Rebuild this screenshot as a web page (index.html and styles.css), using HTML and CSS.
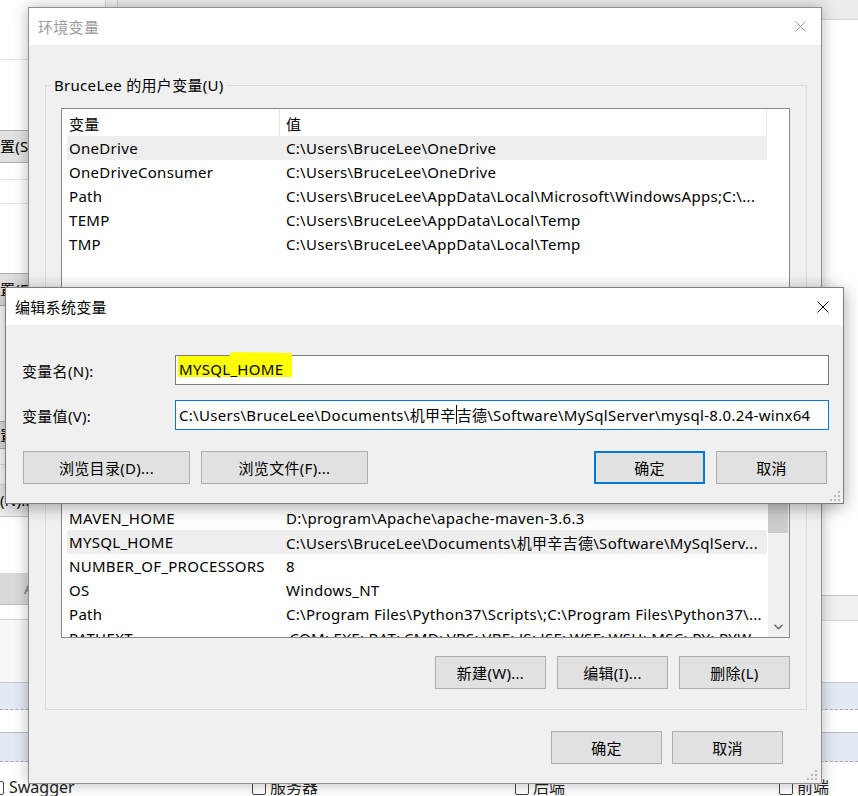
FILE: index.html
```html
<!DOCTYPE html>
<html lang="zh-CN">
<head>
<meta charset="utf-8">
<title>环境变量</title>
<link rel="stylesheet" href="styles.css">
</head>
<body>
<div class="desk">
  <div class="bgwin">
    <div class="bgmain">
      <div class="pane-left">
        <div class="lp-head"></div>
        <div class="lp-btn lp-btn1">置(S)...</div>
        <div class="lp-row1"></div>
        <div class="lp-row2"></div>
        <div class="lp-btn lp-btn2">置(E)...</div>
        <div class="lp-btn lp-btn3">置(V)...</div>
        <div class="lp-row3"></div>
        <div class="lp-row4"></div>
        <div class="lp-nbtn">(N)...</div>
        <div class="lp-dark">A</div>
        <div class="lp-row5"></div>
        <div class="lp-light"></div>
        <div class="blue1"></div>
        <div class="white22"></div>
        <div class="blue2"></div>
      </div>
      <div class="pane-mid"></div>
      <div class="pane-right">
        <div class="rp-head"></div>
        <div class="rp-gray"></div>
        <div class="blue1 rp-blue1"></div>
        <div class="white22"></div>
        <div class="blue2"></div>
      </div>
    </div>
    <div class="checks">
      <div class="chk chk1"><span class="box"></span><span>Swagger</span></div>
      <div class="chk chk2"><span class="box"></span><span>服务器</span></div>
      <div class="chk chk3"><span class="box"></span><span>后端</span></div>
      <div class="chk chk4"><span class="box"></span><span>前端</span></div>
    </div>
  </div>

  <div class="env">
    <div class="env-title">
      <span>环境变量</span>
      <svg class="xicon" width="11" height="11" viewBox="0 0 11 11"><path d="M0.5 0.5 L10.5 10.5 M10.5 0.5 L0.5 10.5" stroke="#9a9a9a" stroke-width="1" fill="none"/></svg>
    </div>
    <div class="env-body">
      <fieldset class="group group-user">
        <legend>BruceLee 的用户变量(U)</legend>
        <div class="list list-user">
          <div class="list-main">
            <div class="list-head"><span class="h-name">变量</span><span class="h-val">值</span></div>
            <div class="row sel"><span class="c-name">OneDrive</span><span class="c-val">C:\Users\BruceLee\OneDrive</span></div>
            <div class="row"><span class="c-name">OneDriveConsumer</span><span class="c-val">C:\Users\BruceLee\OneDrive</span></div>
            <div class="row"><span class="c-name">Path</span><span class="c-val">C:\Users\BruceLee\AppData\Local\Microsoft\WindowsApps;C:\...</span></div>
            <div class="row"><span class="c-name">TEMP</span><span class="c-val">C:\Users\BruceLee\AppData\Local\Temp</span></div>
            <div class="row"><span class="c-name">TMP</span><span class="c-val">C:\Users\BruceLee\AppData\Local\Temp</span></div>
          </div>
        </div>
        <div class="group-btns">
          <button class="btn">新建(N)...</button>
          <button class="btn">编辑(E)...</button>
          <button class="btn">删除(D)</button>
        </div>
      </fieldset>

      <fieldset class="group group-sys">
        <legend>系统变量(S)</legend>
        <div class="list list-sys">
          <div class="list-main">
            <div class="list-head"><span class="h-name">变量</span><span class="h-val">值</span></div>
            <div class="row"><span class="c-name">ComSpec</span><span class="c-val">C:\Windows\system32\cmd.exe</span></div>
            <div class="row"><span class="c-name">DriverData</span><span class="c-val">C:\Windows\System32\Drivers\DriverData</span></div>
            <div class="row"><span class="c-name">JAVA_HOME</span><span class="c-val">C:\Program Files\Java\jdk1.8.0_281</span></div>
            <div class="row"><span class="c-name">MAVEN_HOME</span><span class="c-val">D:\program\Apache\apache-maven-3.6.3</span></div>
            <div class="row sel"><span class="c-name">MYSQL_HOME</span><span class="c-val">C:\Users\BruceLee\Documents\机甲辛吉德\Software\MySqlServ...</span></div>
            <div class="row"><span class="c-name">NUMBER_OF_PROCESSORS</span><span class="c-val">8</span></div>
            <div class="row"><span class="c-name">OS</span><span class="c-val">Windows_NT</span></div>
            <div class="row"><span class="c-name">Path</span><span class="c-val">C:\Program Files\Python37\Scripts\;C:\Program Files\Python37\...</span></div>
            <div class="row"><span class="c-name">PATHEXT</span><span class="c-val">.COM;.EXE;.BAT;.CMD;.VBS;.VBE;.JS;.JSE;.WSF;.WSH;.MSC;.PY;.PYW</span></div>
          </div>
          <div class="vscroll">
            <div class="sb-up"></div>
            <div class="sb-thumb"></div>
            <div class="sb-fill"></div>
            <div class="sb-down"><svg width="9" height="6" viewBox="0 0 9 6"><path d="M0.5 0.8 L4.5 4.8 L8.5 0.8" stroke="#606060" stroke-width="1.3" fill="none"/></svg></div>
          </div>
        </div>
        <div class="group-btns">
          <button class="btn">新建(W)...</button>
          <button class="btn">编辑(I)...</button>
          <button class="btn">删除(L)</button>
        </div>
      </fieldset>

      <div class="dlg-btns">
        <button class="btn">确定</button>
        <button class="btn">取消</button>
      </div>
    </div>
    <svg class="grip" width="12" height="12" viewBox="0 0 12 12"><g fill="#b8b8b8"><rect x="9" y="1" width="2" height="2"/><rect x="5" y="5" width="2" height="2"/><rect x="9" y="5" width="2" height="2"/><rect x="1" y="9" width="2" height="2"/><rect x="5" y="9" width="2" height="2"/><rect x="9" y="9" width="2" height="2"/></g></svg>
  </div>

  <div class="edit">
    <div class="edit-title">
      <span>编辑系统变量</span>
      <svg class="xicon" width="12" height="12" viewBox="0 0 12 12"><path d="M0.5 0.5 L11.5 11.5 M11.5 0.5 L0.5 11.5" stroke="#000" stroke-width="1" fill="none"/></svg>
    </div>
    <div class="edit-body">
      <div class="field">
        <label>变量名(N):</label>
        <div class="input"><span class="hl"></span><span class="hl-text">MYSQL_HOME</span></div>
      </div>
      <div class="field">
        <label>变量值(V):</label>
        <div class="input focus"><span>C:\Users\BruceLee\Documents\机甲辛</span><span class="caret"></span><span>吉德\Software\MySqlServer\mysql-8.0.24-winx64</span></div>
      </div>
      <div class="edit-btns">
        <button class="btn wide">浏览目录(D)...</button>
        <button class="btn wide">浏览文件(F)...</button>
        <span class="spacer"></span>
        <button class="btn default">确定</button>
        <button class="btn">取消</button>
      </div>
    </div>
    <svg class="grip" width="12" height="12" viewBox="0 0 12 12"><g fill="#b8b8b8"><rect x="9" y="1" width="2" height="2"/><rect x="5" y="5" width="2" height="2"/><rect x="9" y="5" width="2" height="2"/><rect x="1" y="9" width="2" height="2"/><rect x="5" y="9" width="2" height="2"/><rect x="9" y="9" width="2" height="2"/></g></svg>
  </div>
</div>
</body>
</html>
```

FILE: styles.css
```css
* { box-sizing: border-box; }
html, body { margin: 0; padding: 0; }
body {
  width: 858px;
  height: 796px;
  overflow: hidden;
  background: #fff;
  font-family: "Noto Sans", "Noto Sans CJK SC", sans-serif;
  font-size: 15px;
  letter-spacing: 0.3px;
  color: #000;
}
.desk { position: relative; width: 858px; height: 796px; overflow: hidden; }

/* background application window */
.bgwin { position: absolute; inset: 0; display: flex; flex-direction: column; background: #fff; }
.bgmain { display: flex; height: 779px; }
.pane-left { width: 105px; display: flex; flex-direction: column; white-space: nowrap; }
.pane-mid { width: 13px; border-left: 1px solid #d4d4d4; border-right: 1px solid #d4d4d4; background: #f3f3f3; }
.pane-right { flex: 1; display: flex; flex-direction: column; }

.lp-head { height: 60px; border-bottom: 1px solid #e3e3e3; flex: none; }
.lp-btn { height: 33px; flex: none; background: #e1e1e1; border: 1px solid #adadad; border-left: 0; line-height: 31px; overflow: hidden; }
.lp-btn1 { margin-top: 70px; }
.lp-row1 { height: 17px; border-bottom: 1px solid #e3e3e3; flex: none; }
.lp-row2 { height: 24px; border-bottom: 1px solid #e3e3e3; flex: none; }
.lp-btn2 { margin-top: 69px; }
.lp-btn3 { margin-top: 115px; height: 28px; line-height: 26px; }
.lp-row3 { height: 16px; border-bottom: 1px solid #e3e3e3; flex: none; }
.lp-row4 { height: 20px; border-bottom: 1px solid #e3e3e3; flex: none; }
.lp-nbtn { height: 32px; flex: none; background: #f0f0f0; border-bottom: 1px solid #c8c8c8; line-height: 30px; overflow: hidden; }
.lp-dark { margin-top: 56px; height: 32px; flex: none; background: #d9d9d9; border-bottom: 1px solid #bdbdbd; line-height: 30px; padding-left: 24px; color: #777; overflow: hidden; }
.lp-row5 { height: 15px; border-bottom: 1px solid #d0d0d0; flex: none; }
.lp-light { height: 62px; background: #f7f7f7; flex: none; }
.blue1 { height: 28px; flex: none; background: #e3eaf5; border-top: 1px solid #c9c9c9; border-bottom: 1px dashed #a8a8a8; }
.white22 { height: 22px; flex: none; }
.blue2 { height: 30px; flex: none; background: #e3eaf5; border-top: 1px solid #b8b8b8; border-bottom: 1px dashed #a8a8a8; }

.rp-head { height: 20px; flex: none; background: #ececec; border-bottom: 1px solid #d5d5d5; }
.rp-gray { margin-top: 575px; height: 26px; flex: none; background: #f0f0f0; border-top: 1px solid #c8c8c8; border-bottom: 1px solid #d8d8d8; }
.rp-blue1 { margin-top: 61px; }

.checks { height: 17px; display: flex; font-size: 16px; line-height: 17px; white-space: nowrap; color: #222; letter-spacing: 0; }
.chk { display: flex; align-items: center; gap: 4px; flex: none; }
.chk .box { width: 14px; height: 14px; border: 1px solid #444; border-radius: 2px; background: #fff; flex: none; }
.chk1 { margin-left: -10px; width: 262px; gap: 5px; }
.chk2 { width: 263px; }
.chk3 { width: 264px; }

/* environment variables dialog */
.env {
  position: absolute;
  left: 28px;
  top: 7px;
  width: 794px;
  height: 777px;
  border: 1px solid #8f8f8f;
  background: #f0f0f0;
  box-shadow: 0 0 14px rgba(0, 0, 0, 0.28);
  display: flex;
  flex-direction: column;
}
.env-title {
  height: 37px;
  flex: none;
  background: #fff;
  display: flex;
  align-items: center;
  justify-content: space-between;
  padding: 0 15px 0 9px;
  color: #9a9a9a;
}
.xicon { display: block; }
.env-body { flex: 1; display: flex; flex-direction: column; padding: 30px 14px 0 16px; }

fieldset.group {
  margin: 0;
  padding: 13px 16px 20px 15px;
  border: 1px solid #dcdcdc;
  min-width: 0;
}
fieldset.group legend { margin-left: -9px; padding: 0 2px; line-height: 20px; }
.group-sys { margin-top: 8px !important; }

.list { background: #fff; border: 1px solid #8a8a8a; display: flex; padding-left: 5px; overflow: hidden; }
.list-user { height: 185px; }
.list-sys { height: 232px; }
.list-main { width: 700px; flex: none; display: flex; flex-direction: column; }
.list-head { height: 27px; flex: none; display: flex; }
.h-name { width: 213px; flex: none; padding: 3px 0 0 2px; line-height: 24px; border-right: 1px solid #e5e5e5; }
.h-val { flex: 1; padding: 3px 0 0 6px; line-height: 24px; border-right: 1px solid #e5e5e5; }
.row { height: 24px; flex: none; display: flex; align-items: center; white-space: nowrap; }
.row.sel { background: #eeeeee; }
.c-name { width: 219px; flex: none; padding-left: 2px; overflow: hidden; }
.c-val { flex: 1; overflow: hidden; }

.vscroll { width: 21px; margin-left: 1px; flex: none; background: #f0f0f0; display: flex; flex-direction: column; }
.sb-up { height: 17px; flex: none; }
.sb-thumb { height: 109px; flex: none; background: #cdcdcd; margin-right: 1px; }
.sb-fill { flex: 1; }
.sb-down { height: 17px; flex: none; display: flex; align-items: center; justify-content: center; padding-bottom: 4px; }
.sb-down svg { display: block; }

.group-btns { display: flex; justify-content: flex-end; gap: 11px; margin-top: 18px; }
.btn {
  width: 111px;
  height: 33px;
  flex: none;
  background: #e1e1e1;
  border: 1px solid #adadad;
  font: inherit;
  letter-spacing: inherit;
  color: #000;
  padding: 0;
  border-radius: 0;
}
.dlg-btns { display: flex; justify-content: flex-end; gap: 10px; margin: 21px 24px 0 0; }

.grip { position: absolute; right: 3px; bottom: 2px; display: block; }

/* edit system variable dialog */
.edit {
  position: absolute;
  left: 5px;
  top: 287px;
  width: 839px;
  height: 217px;
  border: 1px solid #7d7d7d;
  background: #f0f0f0;
  box-shadow: 0 3px 16px rgba(0, 0, 0, 0.35);
  display: flex;
  flex-direction: column;
}
.edit .grip { right: 2px; bottom: 1px; }
.edit-title {
  height: 37px;
  flex: none;
  background: #fff;
  display: flex;
  align-items: center;
  justify-content: space-between;
  padding: 0 14px 0 9px;
}
.edit-body { display: flex; flex-direction: column; padding: 30px 14px 0 16px; }
.field { display: flex; align-items: center; height: 30px; }
.field + .field { margin-top: 15px; }
.field label { width: 153px; flex: none; }
.input {
  position: relative;
  flex: 1;
  height: 30px;
  border: 1px solid #7a7a7a;
  background: #fff;
  padding: 0 0 2px 3px;
  display: flex;
  align-items: center;
  white-space: nowrap;
}
.input.focus { border-color: #0078d7; }
.hl {
  position: absolute;
  left: 2px;
  top: -4px;
  width: 114px;
  height: 25px;
  background: #ffff00;
  clip-path: polygon(0 4px, 51px 4px, 54px 0, 100% 1px, 100% 100%, 0 100%);
}
.hl-text { position: relative; }
.caret { display: inline-block; width: 1px; height: 19px; background: #000; flex: none; }
.edit-btns { display: flex; gap: 11px; margin-top: 21px; padding: 0 2px 0 1px; }
.edit-btns .wide { width: 167px; }
.spacer { flex: 1; }
.btn.default { border: 2px solid #0078d7; }
```
